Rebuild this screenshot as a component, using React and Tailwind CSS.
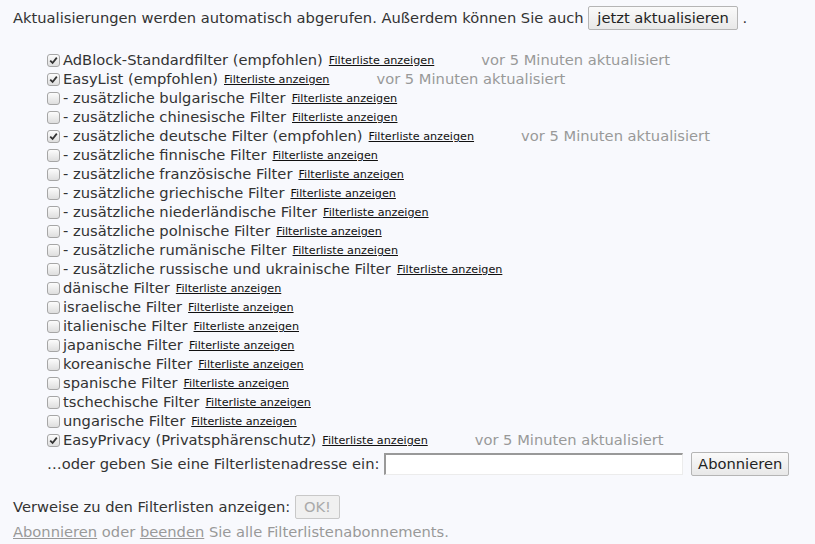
import React from "react";

const filters = [
  { name: "AdBlock-Standardfilter (empfohlen)", checked: true, status: "vor 5 Minuten aktualisiert" },
  { name: "EasyList (empfohlen)", checked: true, status: "vor 5 Minuten aktualisiert" },
  { name: "- zusätzliche bulgarische Filter" },
  { name: "- zusätzliche chinesische Filter" },
  { name: "- zusätzliche deutsche Filter (empfohlen)", checked: true, status: "vor 5 Minuten aktualisiert" },
  { name: "- zusätzliche finnische Filter" },
  { name: "- zusätzliche französische Filter" },
  { name: "- zusätzliche griechische Filter" },
  { name: "- zusätzliche niederländische Filter" },
  { name: "- zusätzliche polnische Filter" },
  { name: "- zusätzliche rumänische Filter" },
  { name: "- zusätzliche russische und ukrainische Filter" },
  { name: "dänische Filter" },
  { name: "israelische Filter" },
  { name: "italienische Filter" },
  { name: "japanische Filter" },
  { name: "koreanische Filter" },
  { name: "spanische Filter" },
  { name: "tschechische Filter" },
  { name: "ungarische Filter" },
  { name: "EasyPrivacy (Privatsphärenschutz)", checked: true, status: "vor 5 Minuten aktualisiert" },
];

const Checkbox = ({ checked }) => (
  <span className="inline-flex items-center justify-center w-[13px] h-[13px] mr-[3px] border border-[#a6a6a6] rounded-[3px] bg-gradient-to-b from-[#fcfcfc] to-[#dedede] shrink-0">
    {checked && (
      <svg width="9" height="9" viewBox="0 0 9 9">
        <path d="M1.2 4.6 L3.6 7 L7.8 1.6" fill="none" stroke="#333" strokeWidth="1.8" />
      </svg>
    )}
  </span>
);

const App = () => {
  return (
    <div className="min-h-[544px] bg-[#f8f9fd] text-[#333] text-[14.7px] font-['DejaVu_Sans',sans-serif] px-[13px] pt-[6px]">
      <div className="flex items-center h-[24px]">
        <span>Aktualisierungen werden automatisch abgerufen. Außerdem können Sie auch&nbsp;</span>
        <button className="h-[24px] px-[8px] border border-[#b5b5b5] rounded-[2px] bg-gradient-to-b from-[#fafafa] to-[#e8e8e8] text-[#222]">
          jetzt aktualisieren
        </button>
        <span>&nbsp;.</span>
      </div>

      <div className="mt-[21px] pl-[34px]">
        {filters.map((f) => (
          <div key={f.name} className="flex items-center h-[19px] whitespace-nowrap">
            <Checkbox checked={f.checked} />
            <span>{f.name}</span>
            <a href="#" className="ml-[6px] text-[11.2px] text-[#111] underline mt-[2px]">
              Filterliste anzeigen
            </a>
            {f.status && <span className="ml-[47px] text-[#999]">{f.status}</span>}
          </div>
        ))}
        <div className="flex items-center h-[28px] whitespace-nowrap">
          <span>…oder geben Sie eine Filterlistenadresse ein:&nbsp;</span>
          <input
            type="text"
            className="w-[299px] h-[22px] bg-white border-t-2 border-l-2 border-[#999] border-r border-b border-r-[#ececec] border-b-[#ececec] outline-none"
          />
          <button className="ml-[8px] h-[24px] px-[6px] border border-[#b5b5b5] rounded-[2px] bg-gradient-to-b from-[#fafafa] to-[#e8e8e8] text-[#222]">
            Abonnieren
          </button>
        </div>
      </div>

      <div className="flex items-center mt-[16px] h-[26px]">
        <span>Verweise zu den Filterlisten anzeigen:&nbsp;</span>
        <button disabled className="h-[24px] px-[8px] border border-[#c8c8c8] rounded-[2px] bg-[#f0f0f0] text-[#aaa]">
          OK!
        </button>
      </div>
      <div className="text-[#999] mt-[1px]">
        <a href="#" className="underline">Abonnieren</a> oder <a href="#" className="underline">beenden</a> Sie alle Filterlistenabonnements.
      </div>
    </div>
  );
};

export default App;
